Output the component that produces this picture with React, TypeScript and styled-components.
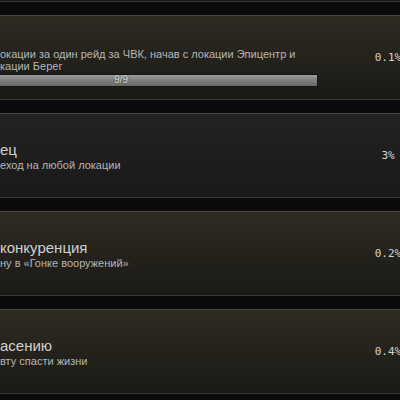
import styled, { createGlobalStyle, css } from "styled-components";

type Achievement = {
  title: string;
  description: string;
  percent: string;
  done: boolean;
  progress?: string;
};

const achievements: Achievement[] = [
  { title: "", description: "", percent: "", done: false },
  {
    title: "",
    description: "окации за один рейд за ЧВК, начав с локации Эпицентр и\nкации Берег",
    percent: "0.1%",
    done: true,
    progress: "9/9",
  },
  { title: "ец", description: "еход на любой локации", percent: "3%", done: false },
  { title: "конкуренция", description: "ну в «Гонке вооружений»", percent: "0.2%", done: true },
  { title: "асению", description: "вту спасти жизни", percent: "0.4%", done: true },
];

export default function App() {
  return (
    <>
      <GlobalStyle />
      <Page>
        <List>
          {achievements.map((a, i) => (
            <Card key={i} $done={a.done}>
              <Icon />
              <Body>
                <Title>{a.title}</Title>
                <Description>{a.description}</Description>
                {a.progress && (
                  <ProgressTrack>
                    <ProgressLabel>{a.progress}</ProgressLabel>
                  </ProgressTrack>
                )}
              </Body>
              <Percent>{a.percent}</Percent>
            </Card>
          ))}
        </List>
      </Page>
    </>
  );
}

const GlobalStyle = createGlobalStyle`
  html, body {
    margin: 0;
    padding: 0;
    background: #0b0b0e;
    overflow: hidden;
  }
`;

const Page = styled.div`
  width: 400px;
  height: 400px;
  overflow: hidden;
  background: #0b0b0e;
  font-family: "Liberation Sans", Arial, sans-serif;
`;

const List = styled.div`
  display: flex;
  flex-direction: column;
  gap: 13px;
  width: max-content;
  margin: -83px 0 0 -104px;
`;

const Card = styled.div<{ $done: boolean }>`
  box-sizing: border-box;
  height: 85px;
  display: grid;
  grid-template-columns: 64px 318px 100px;
  column-gap: 20px;
  align-items: center;
  padding: 0 20px;

  border-top: 1px solid #4a4945;
  border-bottom: 1px solid #383838;

  ${({ $done }) =>
    $done
      ? css`
          background: linear-gradient(180deg, #2e2b21 0%, #24221b 50%, #1a1916 100%);
        `
      : css`
          background: linear-gradient(180deg, #232323 0%, #1e1e1e 50%, #191919 100%);
        `}
`;

const Icon = styled.div`
  width: 64px;
  height: 64px;
  background: #151515;
`;

const Body = styled.div`
  display: flex;
  flex-direction: column;
  justify-content: center;
`;

const Title = styled.div`
  min-height: 19px;
  color: #d0d0d0;
  font-size: 15px;
  line-height: 19px;
  white-space: nowrap;
`;

const Description = styled.div`
  color: #b6b6b6;
  font-size: 11px;
  line-height: 12px;
  white-space: pre-line;
`;

const ProgressTrack = styled.div`
  box-sizing: border-box;
  height: 13px;
  margin: 2px 0 0 -76px;

  display: flex;
  align-items: center;
  justify-content: center;

  border: 1px solid #141414;
  background: linear-gradient(180deg, #9c9c9c 0%, #808080 45%, #686868 100%);
`;

const ProgressLabel = styled.span`
  color: #dadada;
  font-size: 10px;
  line-height: 10px;
  text-shadow: 0 0 2px rgba(0, 0, 0, 0.6);
`;

const Percent = styled.div`
  text-align: center;
  color: #d4d4d4;
  font-family: "DejaVu Sans Mono", monospace;
  font-size: 11px;
`;
